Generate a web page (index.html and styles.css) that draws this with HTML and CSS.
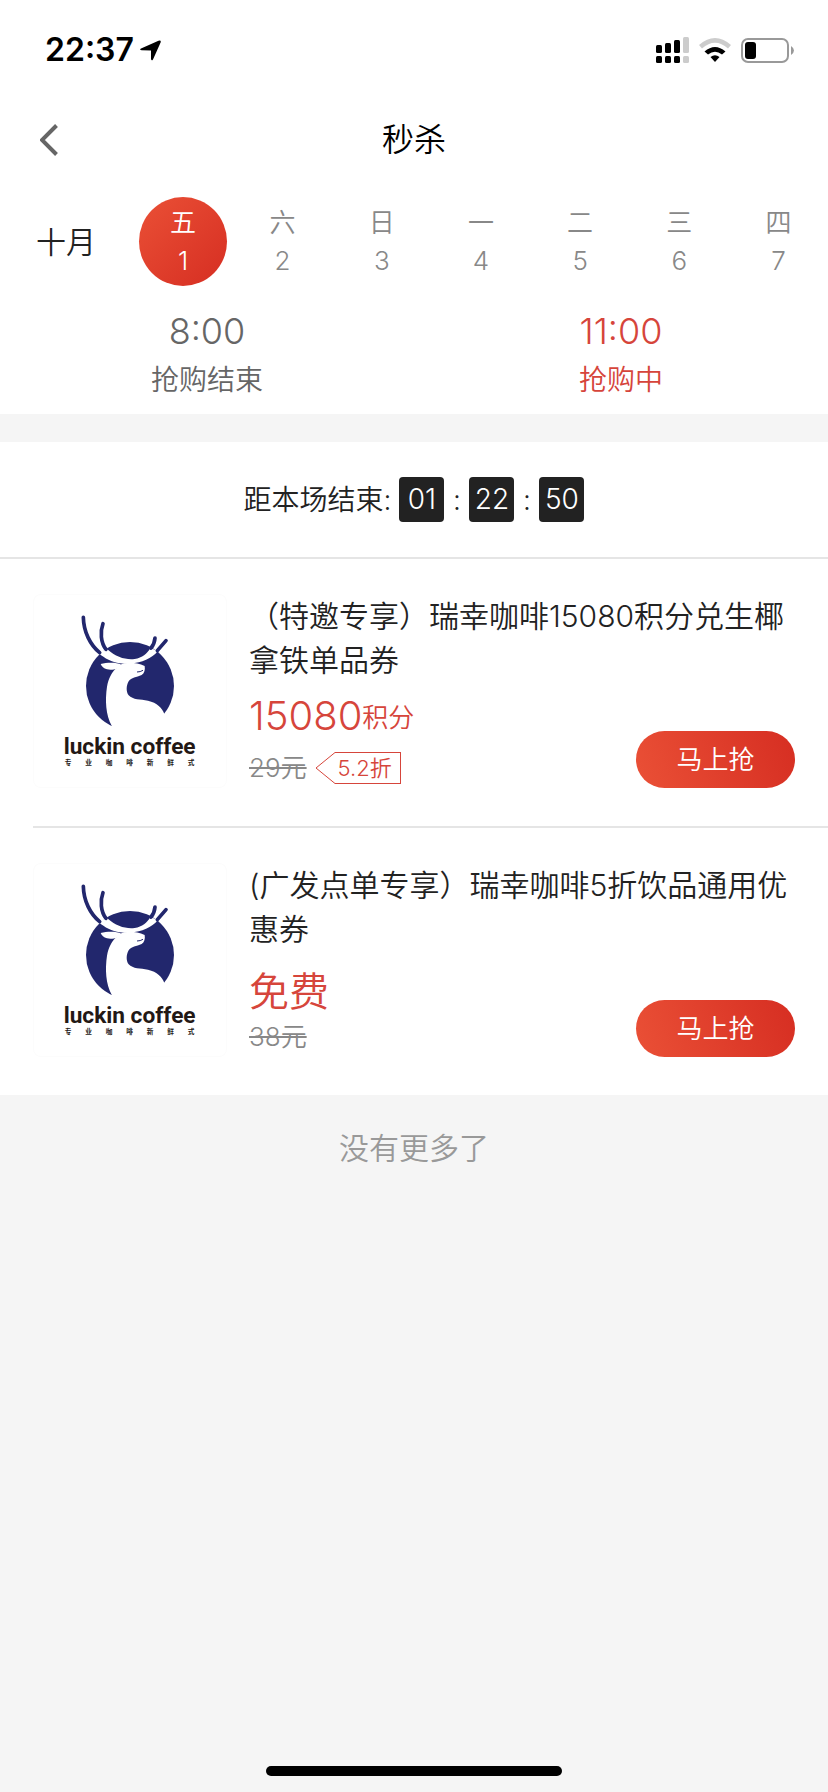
FILE: index.html
```
<!DOCTYPE html>
<html lang="zh">
<head>
    <meta charset="UTF-8">
    <meta name="viewport" content="width=device-width, initial-scale=1.0">
    <title>秒杀</title>
    <link rel="stylesheet" href="styles.css">
</head>
<body>

    <header class="top">
        <div class="status">
            <div class="clock">
                <span>22:37</span>
                <svg width="21" height="21" viewBox="0 0 21 21"><path d="M1 8.600 L18.500 0.700 Q21.400 -0.200 20.600 2.500 L13 19.400 Q11.600 21.500 11 19 L11 10.500 L1.800 10.300 Q-1 10 1 8.600 Z"/></svg>
            </div>
            <div class="signals">
                <svg width="33" height="26" viewBox="0 0 33 26">
                    <rect x="0" y="8" width="6" height="8" rx="1.5"/>
                    <rect x="9" y="6" width="6" height="10" rx="1.5"/>
                    <rect x="18" y="3" width="6" height="13" rx="1.5"/>
                    <rect class="dim" x="27" y="0" width="6" height="16" rx="1.5"/>
                    <rect x="0" y="19" width="6" height="7" rx="1.5"/>
                    <rect x="9" y="19" width="6" height="7" rx="1.5"/>
                    <rect x="18" y="19" width="6" height="7" rx="1.5"/>
                    <rect class="dim" x="27" y="19" width="6" height="7" rx="1.5"/>
                </svg>
                <svg width="32" height="24" viewBox="0 0 32 24">
                    <path class="dim" d="M0 7 Q16 -7 32 7 L29 10.5 Q16 -1 3 10.5 Z"/>
                    <path d="M5.5 13.5 Q16 4.500 26.500 13.500 L23 16.500 Q16 11 9 16.500 Z"/>
                    <path d="M11.500 19 Q16 15.500 20.500 19 L16 24 Z"/>
                </svg>
                <svg width="53" height="25" viewBox="0 0 53 25">
                    <rect class="battery" x="1" y="1" width="46" height="23" rx="6"/>
                    <rect x="4" y="4" width="11" height="17" rx="3"/>
                    <path class="battery-tip" d="M50 8 Q53 10 53 12.500 Q53 15 50 17 Z"/>
                </svg>
            </div>
        </div>

        <div class="nav">
            <button class="back" aria-label="返回">
                <svg width="18" height="32" viewBox="0 0 18 32"><path d="M16.500 1.500 L2 16 L16.500 30.500"/></svg>
            </button>
            <h1>秒杀</h1>
        </div>

        <div class="calendar">
            <div class="month">十月</div>
            <div class="days">
                <button class="day active"><span>五</span><span>1</span></button>
                <button class="day"><span>六</span><span>2</span></button>
                <button class="day"><span>日</span><span>3</span></button>
                <button class="day"><span>一</span><span>4</span></button>
                <button class="day"><span>二</span><span>5</span></button>
                <button class="day"><span>三</span><span>6</span></button>
                <button class="day"><span>四</span><span>7</span></button>
            </div>
        </div>

        <div class="slots">
            <button class="slot"><span class="slot-time">8:00</span><span class="slot-state">抢购结束</span></button>
            <button class="slot active"><span class="slot-time">11:00</span><span class="slot-state">抢购中</span></button>
        </div>
    </header>

    <main>
        <div class="countdown">
            <span class="countdown-label">距本场结束:</span>
            <span class="num">01</span><span class="colon">:</span><span class="num">22</span><span class="colon">:</span><span class="num">50</span>
        </div>

        <ul class="goods">
            <li class="item">
                <svg class="logo" viewBox="40 42 582 582" role="img" aria-label="luckin coffee">
                    <g id="luckin">
                        <circle class="logo-blue" cx="331" cy="318" r="132"/>
                        <!-- neck and chest -->
                        <path class="logo-white" d="M300 256 C320 244 350 248 375 258 C377 270 374 280 366 285 C350 292 335 292 327 304 C319 318 319 336 327 346 C340 360 362 358 385 362 C412 368 428 384 434 402 L440 470 L276 470 L276 437 C258 405 256 360 262 320 C266 295 276 278 288 266 Z"/>
                        <!-- ear -->
                        <path class="logo-white" d="M243 252 C262 247 290 246 305 254 C300 266 278 272 262 268 C252 265 246 260 243 252 Z"/>
                        <!-- antlers inside the circle -->
                        <path class="logo-white" d="M238 220 L248 212 L262 207 C290 232 318 240 345 237 C368 233 382 222 392 204 L402 208 L415 213 C396 236 366 248 333 250 C322 252 308 252 300 250 C278 246 254 236 238 220 Z"/>
                        <path class="logo-line" d="M191 112 C192 155 211 194 240 218"/>
                        <path class="logo-line" d="M250 131 C241 155 243 188 259 208"/>
                        <path class="logo-line" d="M406 174 C405 186 401 196 394 204"/>
                        <path class="logo-line" d="M439 182 L413 212"/>
                        <path class="logo-mouth" d="M352 276 Q362 276 370 271"/>
                        <text class="logo-name" x="132" y="521">luckin coffee</text>
                        <text class="logo-slogan" x="135 197 258 320 381 443 504" y="554">专业咖啡新鲜式</text>
                    </g>
                </svg>
                <div class="info">
                    <h2>（特邀专享）瑞幸咖啡15080积分兑生椰拿铁单品券</h2>
                    <div class="price">15080<small>积分</small></div>
                    <div class="origin">
                        <del>29元</del>
                        <span class="tag">
                            <svg width="20" height="32" viewBox="0 0 20 32"><path d="M20 0.500 L1 16 L20 31.500"/></svg><span>5.2折</span>
                        </span>
                    </div>
                </div>
                <button class="buy">马上抢</button>
            </li>
            <li class="item">
                <svg class="logo" viewBox="40 42 582 582" role="img" aria-label="luckin coffee"><use href="#luckin"/></svg>
                <div class="info">
                    <h2>(广发点单专享）瑞幸咖啡5折饮品通用优惠券</h2>
                    <div class="price free">免费</div>
                    <div class="origin"><del>38元</del></div>
                </div>
                <button class="buy">马上抢</button>
            </li>
        </ul>
    </main>

    <p class="no-more">没有更多了</p>
    <div class="home-bar"></div>

</body>
</html>
```
FILE: styles.css
```
* {
    box-sizing: border-box;
}
body {
    margin: 0;
    min-height: 100vh;
    background-color: #f5f5f5;
    color: #222;
    font-family: Inter, "Noto Sans CJK SC", sans-serif;
    font-weight: 350;
    font-size: 28px;
    line-height: 40px;
}
button {
    padding: 0;
    border: none;
    background: none;
    color: inherit;
    font: inherit;
    cursor: pointer;
}
h1, h2, p, ul {
    margin: 0;
    padding: 0;
    font-weight: inherit;
}
svg {
    display: block;
    flex: none;
}

/* status bar */
.top {
    background-color: #fff;
    padding-bottom: 14px;
}
.status {
    display: flex;
    justify-content: space-between;
    align-items: center;
    height: 100px;
    padding: 0 34px 0 45px;
}
.clock {
    display: flex;
    align-items: center;
    gap: 6px;
    color: #000;
    font-size: 32px;
    font-weight: 600;
}
.signals {
    display: flex;
    align-items: center;
    gap: 10px;
}
.dim {
    fill: #ccc;
}
.battery {
    fill: none;
    stroke: #999;
    stroke-width: 2;
}
.battery-tip {
    fill: #999;
}

/* title */
.nav {
    display: grid;
    grid-template-columns: 1fr auto 1fr;
    align-items: center;
    height: 80px;
    padding: 0 40px;
}
.back {
    justify-self: start;
}
.back path {
    fill: none;
    stroke: #666;
    stroke-width: 4;
}
.nav h1 {
    color: #000;
    font-size: 32px;
}

/* calendar */
.calendar {
    display: flex;
    align-items: center;
    padding-top: 17px;
}
.month {
    width: 133px;
    padding-left: 36px;
    font-size: 30px;
}
.days {
    display: flex;
    flex: 1;
}
.day {
    display: flex;
    flex: 1;
    flex-direction: column;
    align-items: center;
    justify-content: center;
    height: 89px;
    color: #888;
    font-size: 26px;
    line-height: 38px;
}
.day.active {
    flex: 0 0 88px;
    margin: 0 6px;
    border-radius: 50%;
    background: linear-gradient(135deg, #ea5036, #d62e22);
    color: #fff;
}

/* time slots */
.slots {
    display: flex;
    padding-top: 20px;
}
.slot {
    display: flex;
    flex: 1;
    flex-direction: column;
    gap: 4px;
    color: #666;
    text-align: center;
}
.slot.active {
    color: #d6453b;
}
.slot-time {
    font-size: 36px;
    line-height: 50px;
}
.slot-state {
    font-size: 28px;
}

/* countdown */
.countdown {
    display: flex;
    align-items: center;
    justify-content: center;
    margin-top: 28px;
    height: 117px;
    border-bottom: 2px solid #e5e5e5;
    background-color: #fff;
}
.countdown-label {
    margin-right: 8px;
}
.num {
    width: 45px;
    border-radius: 4px;
    background-color: #222;
    color: #fff;
    line-height: 45px;
    text-align: center;
}
.colon {
    width: 25px;
    text-align: center;
}

/* goods list */
.goods {
    padding-left: 33px;
    background-color: #fff;
    list-style: none;
}
.item {
    display: flex;
    align-items: flex-end;
    padding: 35px 33px 38px 0;
}
.item + .item {
    border-top: 2px solid #e5e5e5;
}
.logo {
    width: 194px;
    height: 194px;
    border-radius: 8px;
    box-shadow: inset 0 0 0 1px #fcfcfc;
}
.logo-blue {
    fill: #22276d;
}
.logo-white {
    fill: #fff;
}
.logo-line {
    fill: none;
    stroke: #22276d;
    stroke-width: 11;
    stroke-linecap: round;
}
.logo-mouth {
    fill: none;
    stroke: #22276d;
    stroke-width: 3;
}
.logo-name {
    fill: #231815;
    font-family: Roboto, sans-serif;
    font-size: 68px;
    font-weight: 700;
}
.logo-slogan {
    fill: #231815;
    font-size: 20px;
    font-weight: 700;
}
.info {
    display: flex;
    flex: 1;
    flex-direction: column;
    height: 194px;
    margin-left: 22px;
}
.info h2 {
    margin-right: -160px;
    font-size: 30px;
    line-height: 44px;
}
.price {
    margin-top: 7px;
    color: #d6453b;
    font-size: 40px;
    line-height: 54px;
}
.price.free {
    margin-top: 14px;
}
.price small {
    font-size: 26px;
    line-height: 26px;
    vertical-align: 3px;
}
.origin {
    display: flex;
    align-items: center;
    gap: 8px;
    height: 36px;
    margin-top: auto;
    margin-bottom: 2px;
    color: #888;
    font-size: 26px;
}
.tag {
    display: flex;
    color: #d6453b;
    font-size: 22px;
    line-height: 30px;
}
.tag path {
    fill: none;
    stroke: #d6453b;
}
.tag span {
    padding: 0 8px 0 3px;
    border: 1px solid #d6453b;
    border-left: none;
}
.buy {
    width: 159px;
    height: 57px;
    border-radius: 29px;
    background: linear-gradient(70deg, #ea5036, #d62e22);
    color: #fff;
    font-size: 26px;
}

.no-more {
    padding: 31px 0;
    color: #999;
    font-size: 30px;
    line-height: 44px;
    text-align: center;
}
.home-bar {
    position: fixed;
    bottom: 16px;
    left: 50%;
    width: 296px;
    height: 10px;
    margin-left: -148px;
    border-radius: 5px;
    background-color: #000;
}
```
